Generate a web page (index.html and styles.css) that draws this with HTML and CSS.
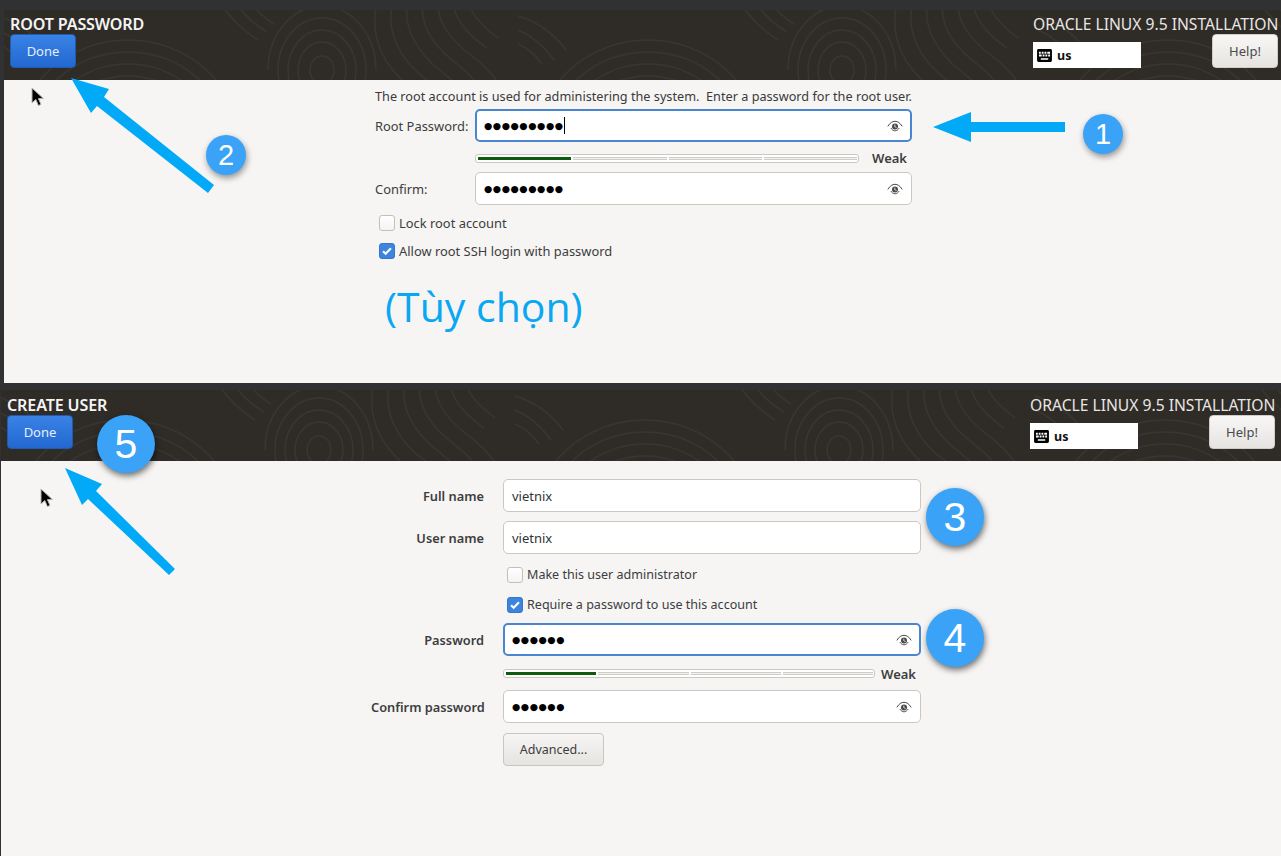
FILE: index.html
```html
<!DOCTYPE html>
<html lang="en">
<head>
<meta charset="utf-8">
<title>Oracle Linux installation</title>
<link rel="stylesheet" href="styles.css">
</head>
<body>
<svg class="defs" width="0" height="0" aria-hidden="true">
  <defs>
    <pattern id="grain" width="520" height="140" patternUnits="userSpaceOnUse" patternTransform="translate(-6 -10)">
      <g fill="none" stroke="#393530" stroke-width="1.400">
        <path d="M20 140a110 100 0 0 1 220 0M32 140a98 88 0 0 1 196 0M44 140a86 76 0 0 1 172 0M56 140a74 64 0 0 1 148 0M68 140a62 52 0 0 1 124 0M80 140a50 40 0 0 1 100 0M92 140a38 28 0 0 1 76 0"/>
        <path d="M300 70a24 28 0 1 1 48 0a24 28 0 1 1-48 0M290 70a34 40 0 1 1 68 0a34 40 0 1 1-68 0M280 70a44 52 0 1 1 88 0a44 52 0 1 1-88 0M270 70a54 64 0 1 1 108 0M312 70a12 14 0 1 1 24 0a12 14 0 1 1-24 0"/>
        <path d="M395 0c-8 30 6 60 34 80s40 40 44 60M410 0c-6 26 8 52 34 72s40 44 44 68M425 0c-4 24 10 46 34 64s42 48 46 76M440 0c-2 20 12 40 34 56s40 44 46 60M455 0c0 18 14 34 34 48M470 0c2 14 14 26 30 38M380 0c-10 34 4 66 34 88s36 36 38 52"/>
        <path d="M0 30c14 6 26 16 36 30M0 16c20 6 36 18 48 34M0 44c10 4 18 12 24 20M235 0c10 14 20 24 34 32M250 0c8 10 16 18 26 24M220 0c12 18 24 30 40 40"/>
      </g>
    </pattern>
    <symbol id="eye" viewBox="0 0 16 12">
      <path d="M.8 6.400C3 2.800 5.400 1.300 8 1.300s5 1.500 7.200 5.100" fill="none" stroke="#4a4a4a" stroke-width="1"/>
      <path d="M3.800 8C5 9.900 6.400 10.800 8 10.800S11 9.900 12.200 8" fill="none" stroke="#4a4a4a" stroke-width=".9"/>
      <circle cx="8" cy="6.400" r="3" fill="#4a4a4a"/>
      <path d="M7.800 4.600v2.100l1.700 .9" fill="none" stroke="#fff" stroke-width=".8"/>
    </symbol>
    <symbol id="kbd" viewBox="0 0 16 14">
      <path fill-rule="evenodd" d="M1.500 0h13A1.500 1.500 0 0 1 16 1.500v11a1.500 1.500 0 0 1-1.500 1.500h-13A1.500 1.500 0 0 1 0 12.500v-11A1.500 1.500 0 0 1 1.500 0zM2 3v2h2V3zm3 0v2h2V3zm3 0v2h2V3zm3 0v2h3V3zM2 6v2h3V6zm4 0v2h2V6zm3 0v2h2V6zm3 0v2h2V6zM4 10v1.500h8V10z" fill="#000"/>
    </symbol>
    <symbol id="tick" viewBox="0 0 16 16">
      <path d="M3.500 8.200l3 3 6-6.400" fill="none" stroke="#fff" stroke-width="2.400"/>
    </symbol>
    <symbol id="pointer" viewBox="0 0 14 20">
      <path d="M1 1v15l3.800-3.500 2.600 6 2.600-1.100-2.600-5.800h5z" fill="#000" stroke="#b5b5b5" stroke-width="1"/>
    </symbol>
  </defs>
</svg>

<section class="spoke spoke-root">
  <header class="bar">
    <svg class="grain" aria-hidden="true"><rect width="100%" height="100%" fill="url(#grain)"/></svg>
    <div class="bar-left">
      <h1 class="title">ROOT PASSWORD</h1>
      <button class="btn btn-done">Done</button>
    </div>
    <div class="bar-right">
      <div class="product">ORACLE LINUX 9.5 INSTALLATION</div>
      <div class="bar-tools">
        <div class="layout"><svg class="kbd"><use href="#kbd"/></svg><b>us</b></div>
        <button class="btn btn-help">Help!</button>
      </div>
    </div>
  </header>
  <div class="body">
    <form class="form form-root">
      <p class="intro">The root account is used for administering the system.&nbsp; Enter a password for the root user.</p>
      <div class="row row-first">
        <label class="label">Root Password:</label>
        <div class="input focus"><span class="dots">●●●●●●●●●</span><span class="caret"></span><svg class="eye"><use href="#eye"/></svg></div>
      </div>
      <div class="strength">
        <div class="meter"><i class="seg on"></i><i class="seg"></i><i class="seg"></i><i class="seg"></i></div>
        <span class="weak">Weak</span>
      </div>
      <div class="row row-confirm">
        <label class="label">Confirm:</label>
        <div class="input"><span class="dots">●●●●●●●●●</span><svg class="eye"><use href="#eye"/></svg></div>
      </div>
      <div class="check check-a"><span class="box"></span>Lock root account</div>
      <div class="check check-b"><span class="box on"><svg class="tick"><use href="#tick"/></svg></span>Allow root SSH login with password</div>
      <div class="optional">(Tùy chọn)</div>
    </form>
  </div>
</section>

<section class="spoke spoke-user">
  <header class="bar">
    <svg class="grain" aria-hidden="true"><rect width="100%" height="100%" fill="url(#grain)"/></svg>
    <div class="bar-left">
      <h1 class="title">CREATE USER</h1>
      <button class="btn btn-done">Done</button>
    </div>
    <div class="bar-right">
      <div class="product">ORACLE LINUX 9.5 INSTALLATION</div>
      <div class="bar-tools">
        <div class="layout"><svg class="kbd"><use href="#kbd"/></svg><b>us</b></div>
        <button class="btn btn-help">Help!</button>
      </div>
    </div>
  </header>
  <div class="body">
    <form class="form form-user">
      <div class="row">
        <label class="label">Full name</label>
        <div class="input">vietnix</div>
      </div>
      <div class="row row-tight">
        <label class="label">User name</label>
        <div class="input">vietnix</div>
      </div>
      <div class="check check-c"><span class="box"></span>Make this user administrator</div>
      <div class="check check-d"><span class="box on"><svg class="tick"><use href="#tick"/></svg></span>Require a password to use this account</div>
      <div class="row row-pass">
        <label class="label">Password</label>
        <div class="input focus"><span class="dots">●●●●●●</span><svg class="eye"><use href="#eye"/></svg></div>
      </div>
      <div class="strength">
        <div class="meter"><i class="seg on"></i><i class="seg"></i><i class="seg"></i><i class="seg"></i></div>
        <span class="weak">Weak</span>
      </div>
      <div class="row row-confirm2">
        <label class="label">Confirm password</label>
        <div class="input"><span class="dots">●●●●●●</span><svg class="eye"><use href="#eye"/></svg></div>
      </div>
      <button type="button" class="btn btn-adv">Advanced...</button>
    </form>
  </div>
</section>

<svg class="overlay" viewBox="0 0 1281 856" aria-hidden="true">
  <polygon class="arrow" points="933,127 971,112 971,122 1065,122 1065,132 971,132 971,142"/>
  <polygon class="arrow" points="71,78 109,89 104,97 214,185 208,193 97,106 91,113"/>
  <polygon class="arrow" points="65,468 102,484 96,491 175,569 169,575 88,499 82,505"/>
</svg>
<svg class="cursor cursor-a" aria-hidden="true"><use href="#pointer"/></svg>
<svg class="cursor cursor-b" aria-hidden="true"><use href="#pointer"/></svg>
<div class="badge small b1">1</div>
<div class="badge small b2">2</div>
<div class="badge b3">3</div>
<div class="badge b4">4</div>
<div class="badge b5">5</div>
</body>
</html>
```
FILE: styles.css
```css
* { box-sizing: border-box; }
html, body { margin: 0; padding: 0; }
body {
  position: relative;
  width: 1281px;
  height: 856px;
  overflow: hidden;
  background: #f6f5f4;
  font-family: "Noto Sans", "Open Sans", sans-serif;
  font-size: 12.900px;
  color: #3d3d3d;
}
.defs { position: absolute; }

.spoke { display: flex; flex-direction: column; background: #303132; }
.spoke-root { height: 383px; padding: 10px 0 0 4px; }
.spoke-user { height: 473px; padding: 7px 0 0 1px; }

.bar {
  position: relative;
  display: flex;
  justify-content: space-between;
  flex: none;
  height: 70px;
  background: #2f2b27;
}
.spoke-root .bar { padding-right: 3px; }
.spoke-user .bar { height: 71px; padding-right: 6px; }
.grain { position: absolute; left: 0; top: 0; width: 100%; height: 100%; }
.bar-left, .bar-right { position: relative; }
.bar-left { padding: 5px 0 0 6px; }
.spoke-user .bar-left { padding-top: 6px; }
.title {
  margin: 0;
  font-size: 16.100px;
  line-height: 19px;
  font-weight: 600;
  color: #f4f4f4;
  letter-spacing: -.15px;
  white-space: nowrap;
}
.bar-right { width: 245px; }
.product {
  padding-top: 5px;
  font-size: 15.650px;
  line-height: 19px;
  color: #e8e6e3;
  white-space: nowrap;
  text-align: right;
}
.spoke-user .product { padding-top: 6px; }
.bar-tools { display: flex; justify-content: space-between; align-items: flex-end; }

.btn {
  display: block;
  height: 34px;
  padding: 0;
  border-radius: 4px;
  font-family: "Noto Sans", "Open Sans", sans-serif;
  font-size: 13px;
  cursor: default;
}
.btn-done {
  width: 66px;
  color: #e6eefb;
  border: 1px solid #1f5cb0;
  background: linear-gradient(#3a82e6, #2268d0);
}
.btn-help {
  width: 66px;
  color: #4a4a4a;
  border: 1px solid #cfcdca;
  background: linear-gradient(#f8f7f6, #e6e4e1);
}
.btn-adv {
  width: 101px;
  height: 33px;
  margin: 10px 0 0 132px;
  font-size: 12.500px;
  color: #3d3d3d;
  border: 1px solid #c8c6c3;
  background: linear-gradient(#f6f5f4, #e6e4e1);
}
.layout {
  display: flex;
  align-items: center;
  width: 108px;
  height: 26px;
  padding-left: 4px;
  background: #fff;
  color: #111;
  font-size: 12.500px;
}
.layout b { margin-left: 5px; }
.kbd { width: 15px; height: 13px; }

.body { flex: 1; background: #f6f5f4; }
.form { position: relative; }
.form-root { width: 908px; padding: 6px 0 0 371px; }
.form-user { width: 920px; padding: 18px 0 0 370px; }

.intro { margin: 0; font-size: 12.700px; line-height: 20px; color: #3a3a3a; white-space: nowrap; }

.row { display: flex; align-items: center; }
.label { flex: none; white-space: nowrap; }
.input {
  position: relative;
  display: flex;
  flex: 1;
  align-items: center;
  height: 33px;
  padding: 0 8px;
  background: #fff;
  border: 1px solid #cdc7c2;
  border-radius: 5px;
  color: #2e3436;
  font-size: 13px;
}
.input.focus { padding: 0 7px; border: 2px solid #4a86cf; }
.dots { font-family: "DejaVu Sans", sans-serif; font-size: 9.500px; letter-spacing: .55px; color: #000; }
.caret { width: 1px; height: 17px; margin-left: 0; background: #000; }
.eye { position: absolute; right: 8px; top: 50%; width: 16px; height: 12px; margin-top: -6px; }
.focus .eye { right: 7px; }

.form-root .label { width: 100px; }
.row-first { margin-top: 3px; }
.row-confirm { margin-top: 9px; }
.strength { display: flex; align-items: center; font-weight: 600; }
.form-root .strength { margin: 11px 0 0 100px; gap: 13px; }
.form-user .strength { margin: 11px 0 0 132px; gap: 6px; }
.meter {
  display: flex;
  gap: 2px;
  height: 9px;
  padding: 2px 1px 2px 2px;
  background: #fff;
  border: 1px solid #cdc7c2;
  border-radius: 3px;
}
.form-root .meter { width: 384px; }
.form-user .meter { width: 372px; }
.seg { flex: 1; height: 3px; background: #f2f1f0; border: 1px solid #d0cec9; border-width: 1px 0; }
.seg.on { background: #0f5a10; border-color: #0f5a10; }
.weak { font-size: 13px; line-height: 10px; color: #3d3d3d; }
.form-root .weak { margin-right: -5px; }
.form-user .weak { margin-top: 2px; }

.check { display: flex; align-items: center; font-size: 12.900px; line-height: 16px; white-space: nowrap; }
.form-user .check { font-size: 12.550px; }
.box {
  flex: none;
  display: block;
  width: 16px;
  height: 16px;
  margin-right: 4px;
  background: linear-gradient(#fff, #f4f3f2);
  border: 1px solid #c3c0bc;
  border-radius: 3px;
}
.box.on { background: #3d84dd; border-color: #3577c9; }
.tick { display: block; width: 14px; height: 14px; }
.check-a { margin: 10px 0 0 4px; }
.check-b { margin: 12px 0 0 4px; }
.optional {
  margin: 21px 0 0 10px;
  font-family: "Open Sans", "Noto Sans", sans-serif;
  font-size: 41px;
  line-height: 52px;
  color: #0aa7f2;
}

.form-user .label { width: 113px; margin-right: 19px; font-size: 12.800px; font-weight: 600; text-align: right; }
.row-tight { margin-top: 9px; }
.check-c { margin: 13px 0 0 136px; }
.check-d { margin: 14px 0 0 136px; }
.row-pass { margin-top: 10px; }
.row-confirm2 { margin-top: 11px; }

.overlay { position: absolute; left: 0; top: 0; width: 1281px; height: 856px; pointer-events: none; }
.arrow { fill: #02a9f7; }

.cursor { position: absolute; width: 14px; height: 20px; }
.cursor-a { left: 31px; top: 87px; }
.cursor-b { left: 40px; top: 488px; }

.badge {
  position: absolute;
  width: 58px;
  height: 58px;
  border-radius: 50%;
  background: #3aa3f7;
  color: #fff;
  font-family: "Liberation Sans", Arial, sans-serif;
  font-size: 41px;
  line-height: 58px;
  text-align: center;
  box-shadow: 1px 3px 6px rgba(0,0,0,.55);
}
.badge.small { width: 40px; height: 40px; font-size: 29px; line-height: 40px; box-shadow: 1px 3px 6px rgba(0,0,0,.4); }
.b1 { left: 1083px; top: 114px; }
.b2 { left: 206px; top: 135px; }
.b3 { left: 926px; top: 488px; }
.b4 { left: 926px; top: 609px; }
.b5 { left: 97px; top: 415px; }
```
